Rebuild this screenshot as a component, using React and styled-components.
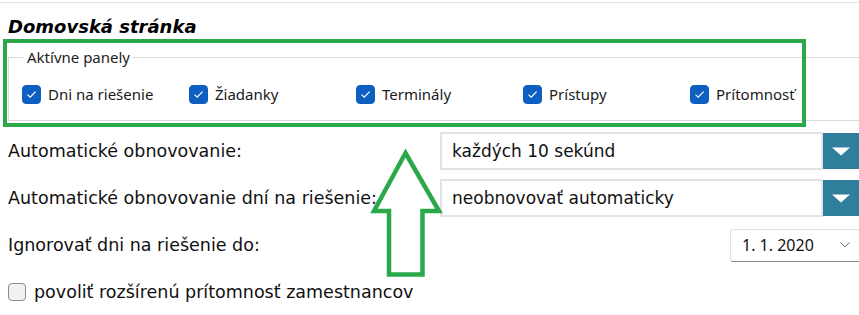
import React from "react";
import styled, { createGlobalStyle } from "styled-components";

const GlobalStyle = createGlobalStyle`
  html, body { margin: 0; padding: 0; background: #ffffff; overflow: hidden; }
  body { font-family: "DejaVu Sans", Verdana, sans-serif; color: #111; }
  * { box-sizing: border-box; }
`;

const Page = styled.div`
  position: relative;
  width: 859px;
  height: 315px;
  padding-top: 2px;
`;

const TopRule = styled.div`
  border-top: 1px solid #e4e4e4;
`;

const Title = styled.h2`
  margin: 13px 0 0 8px;
  font-family: "DejaVu Sans", Verdana, sans-serif;
  font-size: 18px;
  line-height: 21px;
  font-weight: bold;
  font-style: italic;
  color: #000;
`;

const PanelArea = styled.section`
  position: relative;
  padding-top: 10px;
`;

const Fieldset = styled.fieldset`
  margin: 0 0 0 8px;
  padding: 18px 0 16px 13px;
  border: 1px solid #d9d9d9;
  border-right: none;
  min-width: 0;
`;

const Legend = styled.legend`
  margin-left: 2px;
  padding: 0 3px;
  font-family: "Noto Sans", "Open Sans", sans-serif;
  font-size: 15px;
  line-height: 20px;
  color: #222;
`;

const PanelGrid = styled.div`
  display: grid;
  grid-template-columns: repeat(5, 167px);
`;

const CheckItem = styled.label`
  display: flex;
  align-items: center;
  gap: 7px;
  font-family: "Noto Sans", "Open Sans", sans-serif;
  font-size: 15px;
  line-height: 19px;
  color: #1a1a1a;
`;

const CheckBox = styled.span`
  display: inline-flex;
  align-items: center;
  justify-content: center;
  width: ${(p) => p.$size}px;
  height: ${(p) => p.$size}px;
  border-radius: 4px;
  background: ${(p) => (p.$checked ? "#0d60c2" : "#f1f1f1")};
  border: 1px solid ${(p) => (p.$checked ? "#0d60c2" : "#8c8c8c")};
  flex: none;
`;

const Annotation = styled.div`
  position: absolute;
  left: 3px;
  top: 2px;
  width: 803px;
  height: 88px;
  border: 4px solid #2aa84a;
  pointer-events: none;
`;

const Form = styled.div`
  display: grid;
  grid-template-columns: 432px 1fr;
  grid-auto-rows: 38px;
  row-gap: 9px;
  margin-top: 11px;
  padding-left: 8px;
  align-items: center;
`;

const Label = styled.div`
  font-family: "DejaVu Sans", Verdana, sans-serif;
  font-size: 17.5px;
  color: #111;
  white-space: nowrap;
`;

const SelectWrap = styled.div`
  display: flex;
  align-items: center;
  height: 38px;
`;

const SelectField = styled.div`
  flex: 1;
  height: 38px;
  display: flex;
  align-items: center;
  padding-left: 10px;
  border: 2px solid #e3e3e3;
  font-family: "DejaVu Sans", Verdana, sans-serif;
  font-size: 17px;
  color: #111;
`;

const DropButton = styled.div`
  width: 36px;
  height: 36px;
  background: #2f7e9c;
  display: flex;
  align-items: center;
  justify-content: center;
  flex: none;
`;

const DateField = styled.div`
  justify-self: end;
  width: 129px;
  height: 33px;
  display: flex;
  align-items: center;
  justify-content: space-between;
  padding: 0 9px 0 11px;
  border: 1px solid #e2e2e2;
  border-bottom-color: #8a8a8a;
  border-right: none;
  border-radius: 3px 0 0 3px;
  font-family: "Noto Sans", "Open Sans", sans-serif;
  font-size: 16px;
  color: #111;
`;

const CheckRow = styled.label`
  grid-column: 1 / -1;
  display: flex;
  align-items: center;
  gap: 8px;
  font-family: "DejaVu Sans", Verdana, sans-serif;
  font-size: 17.5px;
  color: #111;
`;

const ArrowSvg = styled.svg`
  position: absolute;
  left: 368px;
  top: 146px;
  pointer-events: none;
`;

const Tick = () => (
  <svg width="11" height="9" viewBox="0 0 11 9">
    <path d="M1.5 4.6 L4.2 7.2 L9.6 1.6" fill="none" stroke="#fff" strokeWidth="1.2" />
  </svg>
);

const DownTriangle = () => (
  <svg width="20" height="9" viewBox="0 0 20 9">
    <path d="M1 0.5 H19 L10 8.5 Z" fill="#fff" />
  </svg>
);

const panels = ["Dni na riešenie", "Žiadanky", "Terminály", "Prístupy", "Prítomnosť"];

export default function App() {
  return (
    <>
      <GlobalStyle />
      <Page>
        <TopRule />
        <Title>Domovská stránka</Title>
        <PanelArea>
          <Fieldset>
            <Legend>Aktívne panely</Legend>
            <PanelGrid>
              {panels.map((p) => (
                <CheckItem key={p}>
                  <CheckBox $checked $size={19}>
                    <Tick />
                  </CheckBox>
                  {p}
                </CheckItem>
              ))}
            </PanelGrid>
          </Fieldset>
          <Annotation />
        </PanelArea>
        <Form>
          <Label>Automatické obnovovanie:</Label>
          <SelectWrap>
            <SelectField>každých 10 sekúnd</SelectField>
            <DropButton>
              <DownTriangle />
            </DropButton>
          </SelectWrap>
          <Label>Automatické obnovovanie dní na riešenie:</Label>
          <SelectWrap>
            <SelectField>neobnovovať automaticky</SelectField>
            <DropButton>
              <DownTriangle />
            </DropButton>
          </SelectWrap>
          <Label>Ignorovať dni na riešenie do:</Label>
          <DateField>
            <span>1. 1. 2020</span>
            <svg width="10" height="6" viewBox="0 0 10 6">
              <path d="M0.5 0.5 L5 5 L9.5 0.5" fill="none" stroke="#6e6e6e" strokeWidth="1" />
            </svg>
          </DateField>
          <CheckRow>
            <CheckBox $size={18} />
            povoliť rozšírenú prítomnosť zamestnancov
          </CheckRow>
        </Form>
        <ArrowSvg width="76" height="134" viewBox="368 146 76 134">
          <polygon
            points="405.5,153 439,211 422.5,211 422.5,274.5 389,274.5 389,211 374,211"
            fill="none"
            stroke="#2aa84a"
            strokeWidth="4.5"
            strokeLinejoin="miter"
          />
        </ArrowSvg>
      </Page>
    </>
  );
}
